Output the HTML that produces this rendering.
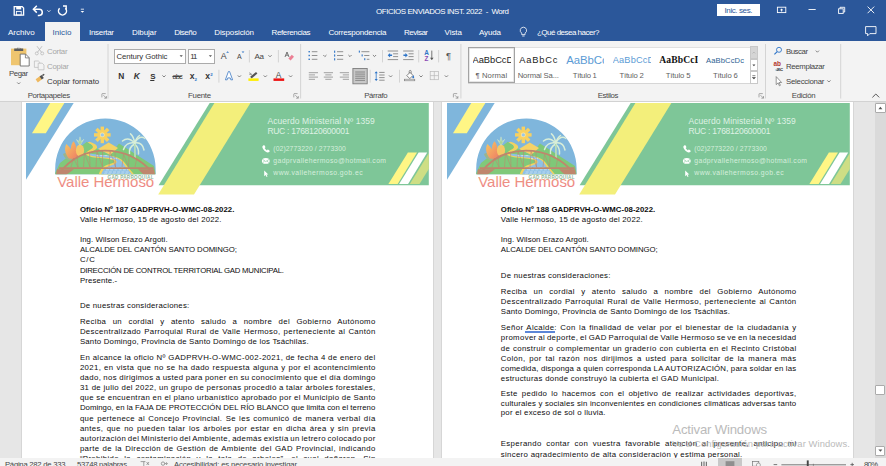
<!DOCTYPE html>
<html lang="es"><head><meta charset="utf-8"><title>OFICIOS ENVIADOS INST. 2022 - Word</title>
<style>
html,body{margin:0;padding:0}
body{width:886px;height:466px;overflow:hidden;position:relative;background:#e6e6e6;
font-family:'Liberation Sans', sans-serif;-webkit-font-smoothing:antialiased}
.t{position:absolute;white-space:pre;margin:0;padding:0}
.s{position:absolute;margin:0;padding:0}
svg{position:absolute;overflow:visible}
</style></head>
<body>
<div class="s" style="left:21.6px;top:101.5px;width:411.2px;height:380px;background:#fff;box-shadow:0 0 0 0.7px #cfcfcf"></div>
<div class="s" style="left:441.8px;top:101.5px;width:411.6px;height:380px;background:#fff;box-shadow:0 0 0 0.7px #cfcfcf"></div>
<svg class="s" style="left:26.0px;top:103.2px" width="403" height="93" viewBox="0 0 403 93" font-family="Liberation Sans, sans-serif"><path d="M0 0H47.7L0 76.8Z" fill="#7fb6dc"/><path d="M24.2 0H38.4L19.8 30.2H6Z" fill="#fff685"/><path d="M183.7 0H402.8V82.2H132.6Z" fill="#7ec698"/><path d="M188.4 0H224.4L168 91.6H132.2Z" fill="#f3ef7b"/><path d="M381.9 49.5H391L371.7 81H362.4Z" fill="#fff685"/><path d="M392.6 49.5H401.2L382.1 81H373.1Z" fill="#fff"/><path d="M383.8 81H393.5L402.8 66V50.3Z" fill="#cede85"/><defs><clipPath id="dome"><path d="M29.2 71.2 L29.2 65.6 A50.2 50.2 0 0 1 129.600 65.6 L129.600 71.2 Z"/></clipPath><linearGradient id="vh" x1="0" y1="0" x2="0" y2="1"><stop offset="0" stop-color="#f0a070"/><stop offset="1" stop-color="#ea6a78"/></linearGradient><linearGradient id="fl" x1="0" y1="0" x2="1" y2="1"><stop offset="0" stop-color="#f8c860"/><stop offset="1" stop-color="#ee7a66"/></linearGradient></defs><g clip-path="url(#dome)"><rect x="29" y="14" width="101" height="58" fill="#7fb6dc"/><g transform="translate(76.3 31.9)" fill="#f8d160"><rect x="-1.7" y="-8.3" width="3.4" height="4.6" transform="rotate(0)"/><rect x="-1.7" y="-8.3" width="3.4" height="4.6" transform="rotate(45)"/><rect x="-1.7" y="-8.3" width="3.4" height="4.6" transform="rotate(90)"/><rect x="-1.7" y="-8.3" width="3.4" height="4.6" transform="rotate(135)"/><rect x="-1.7" y="-8.3" width="3.4" height="4.6" transform="rotate(180)"/><rect x="-1.7" y="-8.3" width="3.4" height="4.6" transform="rotate(225)"/><rect x="-1.7" y="-8.3" width="3.4" height="4.6" transform="rotate(270)"/><rect x="-1.7" y="-8.3" width="3.4" height="4.6" transform="rotate(315)"/><circle r="4.9"/><circle r="2.4" fill="#ffe9a0"/><circle r="1.7" fill="#9cc7e6"/></g><path d="M84 52 L93 40.6 L128 63 L130 72 L84 72Z" fill="#7fc878"/><path d="M72 46 L82.7 39.5 L92 45 L84 52Z" fill="#f5d267"/><path d="M28 72 L34 60 L60.8 38.8 L72 46 L100 60 L100 72Z" fill="#80c97a"/><path d="M63.6 38.8 C69 40.5 72.6 43 70.6 45.6 C68 48.4 63 49 63.6 51 C66 53 80 51 90 54 C97 56.4 99 60 101 63 L108.6 72 L72.6 72 C73.6 68 75.6 64.6 79.6 62.6 C84 60.6 90 60.4 88 57.6 C84 54.6 66 56 60.6 52 C57.6 49 65 47 66.6 45 C68 43 65 41 61.6 39.6Z" fill="#f3d35e"/><path d="M64 50.6 C70 52.2 82 51.4 90 54.8 C95.600 57.2 97 60 99.2 63.2 L106.600 72 L75 72 C76 68.4 77.600 65.6 81.2 63.8 C86 61.600 92.600 61 90 57.4 C86 53.6 70 55 63.2 52Z" fill="#8fc1e6"/><path d="M82 64.6h16M80 66.800h22M78.600 69h25M78 71h27M70 52.6h12M84 55.6h7" stroke="#e2f0fa" stroke-width="0.6" fill="none" stroke-dasharray="3 1.2"/><g fill="none" stroke="#d8eed8" stroke-width="1.5" stroke-linecap="round"><path d="M109.2 55 L108.6 40"/><path d="M108.6 40 C104 35 100 35 96.5 38"/><path d="M108.6 40 C112 34 116 33 119 35.5"/><path d="M108.6 40 C103 39 99 42 97.5 46.5"/><path d="M108.6 40 C114 39 117 42 118 47"/><path d="M108.6 40 C108 35 106 32 104.5 30.8"/><path d="M108.6 40 C110 36 112 33.5 113.5 32.5"/><path d="M108.6 41 C105 43 103 47 103.5 50.5"/><path d="M108.6 41 C112 44 113 47 112.5 51"/></g><path d="M109.2 55 L108.8 41" stroke="#9fcf9c" stroke-width="0.9" fill="none"/><path d="M37 51 C40 49 46 50 48.5 56 C44 58.5 39 57 37 51Z" fill="#9cb48c"/><path d="M43 55.5 C38 50 38.5 44 40.5 41 C42.5 43 44 44.5 44.8 46.5 C44.8 43 45.8 40 47.6 38.3 C50 41 50.6 45 50 48 C51.5 47 52 46.5 52.5 45.8 C54 50 52 54.5 48.5 56Z" fill="url(#fl)"/><ellipse cx="54" cy="47.6" rx="4.1" ry="6" fill="#f6c866"/><path d="M54 42.5 L50.4 36.5 L53 38.6 L54 33.8 L55.2 38.6 L57.8 36.3 L54 42.5Z" fill="#a9d39c" stroke="#e4f2dc" stroke-width="0.4"/><g fill="none" stroke="#bf866d"><path d="M33.5 70 C48 51 66 47.6 79 47.6 C94 47.6 112 53 127 70" stroke-width="1.9"/><path d="M33 65.2 H127.5" stroke-width="1.7"/><path d="M45 64 L47.5 55 M52 64 L51 52.5 M57.5 64 L58.5 50 M64 64 L63.5 48.8 M70 64 L71 48 M76.5 64 L76.5 47.8 M83 64 L84 48 M89.5 64 L89 49 M96 64 L97.5 51 M102.5 64 L103 53 M109 64 L110.5 56.5 M47.5 55 L52 64 M58.5 50 L64 64 M71 48 L76.5 64 M84 48 L89.5 64 M97.5 51 L102.5 64" stroke-width="0.55"/></g><path d="M31 66.3 L48 66.3 L40 72 L30 72Z M112 66.3 L128 66.3 L129 72 L118 72Z" fill="#bf866d"/></g><text x="31.2" y="84.2" font-size="15" opacity="0.9" fill="url(#vh)" textLength="97" lengthAdjust="spacing">Valle Hermoso</text><text x="81.5" y="76.4" font-size="4.6" font-weight="700" fill="#8fb79a" textLength="46" lengthAdjust="spacing">GAD PARROQUIAL</text><text x="241.4" y="20.8" font-size="8.5" fill="#dff2e5" textLength="107.4" lengthAdjust="spacing">Acuerdo Ministerial Nº 1359</text><text x="241.4" y="30.6" font-size="8.5" fill="#dff2e5" textLength="82" lengthAdjust="spacing">RUC : 1768120600001</text><text x="247.3" y="47.8" font-size="6.8" fill="#d6eedd" textLength="72.5" lengthAdjust="spacing">(02)2773220 / 2773300</text><text x="247.3" y="60" font-size="6.8" fill="#d6eedd" textLength="112.7" lengthAdjust="spacing">gadprvallehermoso@hotmail.com</text><text x="247.3" y="72.2" font-size="6.8" fill="#d6eedd" textLength="89.3" lengthAdjust="spacing">www.vallehermoso.gob.ec</text><path d="M237.2 42.6c.5-.5 1-.5 1.400 0l.7 1.100c.2.400.1.700-.2 1l-.5.400c.5 1 1.300 1.800 2.300 2.300l.4-.5c.3-.300.600-.400 1-.2l1.100.700c.5.400.5.900 0 1.400-1 1-2.300.900-3.900-.2-1.500-1.100-2.500-2.400-3-3.900-.3-.8-.1-1.500.7-2.100z" fill="#fff"/><ellipse cx="239.8" cy="57.9" rx="3.9" ry="2.9" fill="#fff"/><path d="M236.6 56.4L239.8 58.6L243 56.4M236.8 59.6L238.7 58M242.8 59.6L240.9 58" stroke="#7ec698" stroke-width="0.6" fill="none"/><path d="M238.2 67.4L238.2 73.2L239.6 71.9L240.600 74L241.5 73.6L240.5 71.600L242.300 71.5Z" fill="#fff"/></svg>
<svg class="s" style="left:447.0px;top:103.2px" width="403" height="93" viewBox="0 0 403 93" font-family="Liberation Sans, sans-serif"><path d="M0 0H47.7L0 76.8Z" fill="#7fb6dc"/><path d="M24.2 0H38.4L19.8 30.2H6Z" fill="#fff685"/><path d="M183.7 0H402.8V82.2H132.6Z" fill="#7ec698"/><path d="M188.4 0H224.4L168 91.6H132.2Z" fill="#f3ef7b"/><path d="M381.9 49.5H391L371.7 81H362.4Z" fill="#fff685"/><path d="M392.6 49.5H401.2L382.1 81H373.1Z" fill="#fff"/><path d="M383.8 81H393.5L402.8 66V50.3Z" fill="#cede85"/><defs><clipPath id="dome2"><path d="M29.2 71.2 L29.2 65.6 A50.2 50.2 0 0 1 129.600 65.6 L129.600 71.2 Z"/></clipPath><linearGradient id="vh2" x1="0" y1="0" x2="0" y2="1"><stop offset="0" stop-color="#f0a070"/><stop offset="1" stop-color="#ea6a78"/></linearGradient><linearGradient id="fl2" x1="0" y1="0" x2="1" y2="1"><stop offset="0" stop-color="#f8c860"/><stop offset="1" stop-color="#ee7a66"/></linearGradient></defs><g clip-path="url(#dome2)"><rect x="29" y="14" width="101" height="58" fill="#7fb6dc"/><g transform="translate(76.3 31.9)" fill="#f8d160"><rect x="-1.7" y="-8.3" width="3.4" height="4.6" transform="rotate(0)"/><rect x="-1.7" y="-8.3" width="3.4" height="4.6" transform="rotate(45)"/><rect x="-1.7" y="-8.3" width="3.4" height="4.6" transform="rotate(90)"/><rect x="-1.7" y="-8.3" width="3.4" height="4.6" transform="rotate(135)"/><rect x="-1.7" y="-8.3" width="3.4" height="4.6" transform="rotate(180)"/><rect x="-1.7" y="-8.3" width="3.4" height="4.6" transform="rotate(225)"/><rect x="-1.7" y="-8.3" width="3.4" height="4.6" transform="rotate(270)"/><rect x="-1.7" y="-8.3" width="3.4" height="4.6" transform="rotate(315)"/><circle r="4.9"/><circle r="2.4" fill="#ffe9a0"/><circle r="1.7" fill="#9cc7e6"/></g><path d="M84 52 L93 40.6 L128 63 L130 72 L84 72Z" fill="#7fc878"/><path d="M72 46 L82.7 39.5 L92 45 L84 52Z" fill="#f5d267"/><path d="M28 72 L34 60 L60.8 38.8 L72 46 L100 60 L100 72Z" fill="#80c97a"/><path d="M63.6 38.8 C69 40.5 72.6 43 70.6 45.6 C68 48.4 63 49 63.6 51 C66 53 80 51 90 54 C97 56.4 99 60 101 63 L108.6 72 L72.6 72 C73.6 68 75.6 64.6 79.6 62.6 C84 60.6 90 60.4 88 57.6 C84 54.6 66 56 60.6 52 C57.6 49 65 47 66.6 45 C68 43 65 41 61.6 39.6Z" fill="#f3d35e"/><path d="M64 50.6 C70 52.2 82 51.4 90 54.8 C95.600 57.2 97 60 99.2 63.2 L106.600 72 L75 72 C76 68.4 77.600 65.6 81.2 63.8 C86 61.600 92.600 61 90 57.4 C86 53.6 70 55 63.2 52Z" fill="#8fc1e6"/><path d="M82 64.6h16M80 66.800h22M78.600 69h25M78 71h27M70 52.6h12M84 55.6h7" stroke="#e2f0fa" stroke-width="0.6" fill="none" stroke-dasharray="3 1.2"/><g fill="none" stroke="#d8eed8" stroke-width="1.5" stroke-linecap="round"><path d="M109.2 55 L108.6 40"/><path d="M108.6 40 C104 35 100 35 96.5 38"/><path d="M108.6 40 C112 34 116 33 119 35.5"/><path d="M108.6 40 C103 39 99 42 97.5 46.5"/><path d="M108.6 40 C114 39 117 42 118 47"/><path d="M108.6 40 C108 35 106 32 104.5 30.8"/><path d="M108.6 40 C110 36 112 33.5 113.5 32.5"/><path d="M108.6 41 C105 43 103 47 103.5 50.5"/><path d="M108.6 41 C112 44 113 47 112.5 51"/></g><path d="M109.2 55 L108.8 41" stroke="#9fcf9c" stroke-width="0.9" fill="none"/><path d="M37 51 C40 49 46 50 48.5 56 C44 58.5 39 57 37 51Z" fill="#9cb48c"/><path d="M43 55.5 C38 50 38.5 44 40.5 41 C42.5 43 44 44.5 44.8 46.5 C44.8 43 45.8 40 47.6 38.3 C50 41 50.6 45 50 48 C51.5 47 52 46.5 52.5 45.8 C54 50 52 54.5 48.5 56Z" fill="url(#fl2)"/><ellipse cx="54" cy="47.6" rx="4.1" ry="6" fill="#f6c866"/><path d="M54 42.5 L50.4 36.5 L53 38.6 L54 33.8 L55.2 38.6 L57.8 36.3 L54 42.5Z" fill="#a9d39c" stroke="#e4f2dc" stroke-width="0.4"/><g fill="none" stroke="#bf866d"><path d="M33.5 70 C48 51 66 47.6 79 47.6 C94 47.6 112 53 127 70" stroke-width="1.9"/><path d="M33 65.2 H127.5" stroke-width="1.7"/><path d="M45 64 L47.5 55 M52 64 L51 52.5 M57.5 64 L58.5 50 M64 64 L63.5 48.8 M70 64 L71 48 M76.5 64 L76.5 47.8 M83 64 L84 48 M89.5 64 L89 49 M96 64 L97.5 51 M102.5 64 L103 53 M109 64 L110.5 56.5 M47.5 55 L52 64 M58.5 50 L64 64 M71 48 L76.5 64 M84 48 L89.5 64 M97.5 51 L102.5 64" stroke-width="0.55"/></g><path d="M31 66.3 L48 66.3 L40 72 L30 72Z M112 66.3 L128 66.3 L129 72 L118 72Z" fill="#bf866d"/></g><text x="31.2" y="84.2" font-size="15" opacity="0.9" fill="url(#vh2)" textLength="97" lengthAdjust="spacing">Valle Hermoso</text><text x="81.5" y="76.4" font-size="4.6" font-weight="700" fill="#8fb79a" textLength="46" lengthAdjust="spacing">GAD PARROQUIAL</text><text x="241.4" y="20.8" font-size="8.5" fill="#dff2e5" textLength="107.4" lengthAdjust="spacing">Acuerdo Ministerial Nº 1359</text><text x="241.4" y="30.6" font-size="8.5" fill="#dff2e5" textLength="82" lengthAdjust="spacing">RUC : 1768120600001</text><text x="247.3" y="47.8" font-size="6.8" fill="#d6eedd" textLength="72.5" lengthAdjust="spacing">(02)2773220 / 2773300</text><text x="247.3" y="60" font-size="6.8" fill="#d6eedd" textLength="112.7" lengthAdjust="spacing">gadprvallehermoso@hotmail.com</text><text x="247.3" y="72.2" font-size="6.8" fill="#d6eedd" textLength="89.3" lengthAdjust="spacing">www.vallehermoso.gob.ec</text><path d="M237.2 42.6c.5-.5 1-.5 1.400 0l.7 1.100c.2.400.1.700-.2 1l-.5.400c.5 1 1.300 1.800 2.300 2.300l.4-.5c.3-.300.600-.400 1-.2l1.100.700c.5.400.5.900 0 1.400-1 1-2.300.900-3.900-.2-1.500-1.100-2.500-2.400-3-3.900-.3-.8-.1-1.500.7-2.100z" fill="#fff"/><ellipse cx="239.8" cy="57.9" rx="3.9" ry="2.9" fill="#fff"/><path d="M236.6 56.4L239.8 58.6L243 56.4M236.8 59.6L238.7 58M242.8 59.6L240.9 58" stroke="#7ec698" stroke-width="0.6" fill="none"/><path d="M238.2 67.4L238.2 73.2L239.6 71.9L240.600 74L241.5 73.6L240.5 71.600L242.300 71.5Z" fill="#fff"/></svg>
<div class="t" style="left:79.90px;top:205px;font-size:7.8px;line-height:9px;color:#0c0c0c;font-weight:700;letter-spacing:0.042px;">Oficio Nº 187 GADPRVH-O-WMC-08-2022.</div>
<div class="t" style="left:79.90px;top:215px;font-size:7.8px;line-height:9px;color:#0c0c0c;letter-spacing:0.205px;">Valle Hermoso, 15 de agosto del 2022.</div>
<div class="t" style="left:79.90px;top:235px;font-size:7.8px;line-height:9px;color:#0c0c0c;letter-spacing:0.097px;">Ing. Wilson Erazo Argoti.</div>
<div class="t" style="left:79.90px;top:245px;font-size:7.8px;line-height:9px;color:#0c0c0c;letter-spacing:-0.062px;">ALCALDE DEL CANTÓN SANTO DOMINGO;</div>
<div class="t" style="left:79.90px;top:255px;font-size:7.8px;line-height:9px;color:#0c0c0c;letter-spacing:0.731px;">C/C</div>
<div class="t" style="left:79.90px;top:266px;font-size:7.8px;line-height:9px;color:#0c0c0c;letter-spacing:-0.241px;">DIRECCIÓN DE CONTROL TERRITORIAL GAD MUNICIPAL.</div>
<div class="t" style="left:79.90px;top:276px;font-size:7.8px;line-height:9px;color:#0c0c0c;letter-spacing:0.146px;">Presente.-</div>
<div class="t" style="left:79.90px;top:301px;font-size:7.8px;line-height:9px;color:#0c0c0c;letter-spacing:0.244px;">De nuestras consideraciones:</div>
<div class="t" style="left:79.90px;top:317px;font-size:7.8px;line-height:9px;color:#0c0c0c;letter-spacing:0.350px;word-spacing:3.885px;">Reciba un cordial y atento saludo a nombre del Gobierno Autónomo</div>
<div class="t" style="left:79.90px;top:327px;font-size:7.8px;line-height:9px;color:#0c0c0c;letter-spacing:0.350px;word-spacing:0.593px;">Descentralizado Parroquial Rural de Valle Hermoso, perteneciente al Cantón</div>
<div class="t" style="left:79.90px;top:337px;font-size:7.8px;line-height:9px;color:#0c0c0c;letter-spacing:0.217px;">Santo Domingo, Provincia de Santo Domingo de los Tsáchilas.</div>
<div class="t" style="left:79.90px;top:353px;font-size:7.8px;line-height:9px;color:#0c0c0c;letter-spacing:0.350px;word-spacing:-0.006px;">En alcance la oficio Nº GADPRVH-O-WMC-002-2021, de fecha 4 de enero del</div>
<div class="t" style="left:79.90px;top:363px;font-size:7.8px;line-height:9px;color:#0c0c0c;letter-spacing:0.350px;word-spacing:0.451px;">2021, en vista que no se ha dado respuesta alguna y por el acontencimiento</div>
<div class="t" style="left:79.90px;top:373px;font-size:7.8px;line-height:9px;color:#0c0c0c;letter-spacing:0.350px;word-spacing:-0.302px;">dado, nos dirigimos a usted para poner en su conocimiento que el día domingo</div>
<div class="t" style="left:79.90px;top:383px;font-size:7.8px;line-height:9px;color:#0c0c0c;letter-spacing:0.350px;word-spacing:-0.116px;">31 de julio del 2022, un grupo de personas procedió a talar árboles forestales,</div>
<div class="t" style="left:79.90px;top:393px;font-size:7.8px;line-height:9px;color:#0c0c0c;letter-spacing:0.350px;word-spacing:-0.111px;">que se encuentran en el plano urbanístico aprobado por el Municipio de Santo</div>
<div class="t" style="left:79.90px;top:403px;font-size:7.8px;line-height:9px;color:#0c0c0c;letter-spacing:0.038px;">Domingo, en la FAJA DE PROTECCIÓN DEL RÍO BLANCO que limita con el terreno</div>
<div class="t" style="left:79.90px;top:414px;font-size:7.8px;line-height:9px;color:#0c0c0c;letter-spacing:0.350px;word-spacing:0.726px;">que pertenece al Concejo Provincial. Se les comunicó de manera verbal día</div>
<div class="t" style="left:79.90px;top:424px;font-size:7.8px;line-height:9px;color:#0c0c0c;letter-spacing:0.350px;word-spacing:0.922px;">antes, que no pueden talar los árboles por estar en dicha área y sin previa</div>
<div class="t" style="left:79.90px;top:434px;font-size:7.8px;line-height:9px;color:#0c0c0c;letter-spacing:0.350px;word-spacing:-0.833px;">autorización del Ministerio del Ambiente, además existía un letrero colocado por</div>
<div class="t" style="left:79.90px;top:444px;font-size:7.8px;line-height:9px;color:#0c0c0c;letter-spacing:0.350px;word-spacing:0.694px;">parte de la Dirección de Gestión de Ambiente del GAD Provincial, indicando</div>
<div class="t" style="left:79.90px;top:454px;font-size:7.8px;line-height:9px;color:#0c0c0c;letter-spacing:0.350px;word-spacing:2.837px;">“Prohibido la contaminación y la tala de arboles”, el cual dañaron. Sin</div>
<div class="t" style="left:500.80px;top:205px;font-size:7.8px;line-height:9px;color:#0c0c0c;font-weight:700;letter-spacing:0.039px;">Oficio Nº 188 GADPRVH-O-WMC-08-2022.</div>
<div class="t" style="left:500.80px;top:215px;font-size:7.8px;line-height:9px;color:#0c0c0c;letter-spacing:0.213px;">Valle Hermoso, 15 de agosto del 2022.</div>
<div class="t" style="left:500.80px;top:235px;font-size:7.8px;line-height:9px;color:#0c0c0c;letter-spacing:0.109px;">Ing. Wilson Erazo Argoti.</div>
<div class="t" style="left:500.80px;top:245px;font-size:7.8px;line-height:9px;color:#0c0c0c;letter-spacing:-0.066px;">ALCALDE DEL CANTÓN SANTO DOMINGO;</div>
<div class="t" style="left:500.80px;top:271px;font-size:7.8px;line-height:9px;color:#0c0c0c;letter-spacing:0.255px;">De nuestras consideraciones:</div>
<div class="t" style="left:500.80px;top:287px;font-size:7.8px;line-height:9px;color:#0c0c0c;letter-spacing:0.350px;word-spacing:3.885px;">Reciba un cordial y atento saludo a nombre del Gobierno Autónomo</div>
<div class="t" style="left:500.80px;top:297px;font-size:7.8px;line-height:9px;color:#0c0c0c;letter-spacing:0.350px;word-spacing:0.593px;">Descentralizado Parroquial Rural de Valle Hermoso, perteneciente al Cantón</div>
<div class="t" style="left:500.80px;top:307px;font-size:7.8px;line-height:9px;color:#0c0c0c;letter-spacing:0.224px;">Santo Domingo, Provincia de Santo Domingo de los Tsáchilas.</div>
<div class="t" style="left:500.80px;top:323px;font-size:7.8px;line-height:9px;color:#0c0c0c;letter-spacing:0.350px;word-spacing:0.899px;">Señor Alcalde: Con la finalidad de velar por el bienestar de la ciudadanía y</div>
<div class="t" style="left:500.80px;top:333px;font-size:7.8px;line-height:9px;color:#0c0c0c;letter-spacing:0.350px;word-spacing:-0.715px;">promover al deporte, el GAD Parroquial de Valle Hermoso se ve en la necesidad</div>
<div class="t" style="left:500.80px;top:344px;font-size:7.8px;line-height:9px;color:#0c0c0c;letter-spacing:0.350px;word-spacing:0.276px;">de construir o complementar un graderío con cubierta en el Recinto Cristóbal</div>
<div class="t" style="left:500.80px;top:354px;font-size:7.8px;line-height:9px;color:#0c0c0c;letter-spacing:0.350px;word-spacing:1.356px;">Colón, por tal razón nos dirijimos a usted para solicitar de la manera más</div>
<div class="t" style="left:500.80px;top:364px;font-size:7.8px;line-height:9px;color:#0c0c0c;letter-spacing:0.195px;">comedida, disponga a quien corresponda LA AUTORIZACIÓN, para soldar en las</div>
<div class="t" style="left:500.80px;top:374px;font-size:7.8px;line-height:9px;color:#0c0c0c;letter-spacing:0.305px;">estructuras donde construyó la cubierta el GAD Municipal.</div>
<div class="s" style="left:524.8px;top:331.4px;width:30.4px;height:1.7px;border-top:0.5px solid #5b86d6;border-bottom:0.5px solid #5b86d6;box-sizing:border-box"></div>
<div class="t" style="left:500.80px;top:389px;font-size:7.8px;line-height:9px;color:#0c0c0c;letter-spacing:0.350px;word-spacing:1.457px;">Este pedido lo hacemos con el objetivo de realizar actividades deportivas,</div>
<div class="t" style="left:500.80px;top:399px;font-size:7.8px;line-height:9px;color:#0c0c0c;letter-spacing:0.193px;">culturales y sociales sin inconvenientes en condiciones climáticas adversas tanto</div>
<div class="t" style="left:500.80px;top:408px;font-size:7.8px;line-height:9px;color:#0c0c0c;letter-spacing:0.233px;">por el exceso de sol o lluvia.</div>
<div class="t" style="left:500.80px;top:439px;font-size:7.8px;line-height:9px;color:#0c0c0c;letter-spacing:0.350px;word-spacing:2.033px;">Esperando contar con vuestra favorable atención al presente, anticipo mi</div>
<div class="t" style="left:500.80px;top:450px;font-size:7.8px;line-height:9px;color:#0c0c0c;letter-spacing:0.316px;">sincero agradecimiento de alta consideración y estima personal.</div>
<div class="t" style="left:672.30px;top:422px;font-size:13.2px;line-height:15px;color:#b4b4b4;letter-spacing:-0.191px;opacity:0.9;">Activar Windows</div>
<div class="t" style="left:672.30px;top:438px;font-size:9.4px;line-height:11px;color:#b4b4b4;letter-spacing:0.089px;opacity:0.9;">Ve a Configuración para activar Windows.</div>
<div class="s" style="left:875px;top:101.5px;width:11px;height:357px;background:#dadada"></div>
<div class="s" style="left:875.3px;top:102.8px;width:10.6px;height:10px;background:#fff;border:0.7px solid #ababab;box-sizing:border-box;border-radius:1px"></div>
<div class="s" style="left:875.3px;top:445.6px;width:10.2px;height:10px;background:#fff;border:0.7px solid #ababab;box-sizing:border-box;border-radius:1px"></div>
<div class="s" style="left:875.4px;top:384.6px;width:10px;height:10.4px;background:#fff;border:0.7px solid #ababab;box-sizing:border-box;border-radius:1px"></div>
<div class="s" style="left:0;top:458px;width:886px;height:8px;background:#f3f3f3"></div>
<div class="s" style="left:0;top:0;width:886px;height:41.3px;background:#2b579a"></div>
<div class="s" style="left:0;top:41.3px;width:886px;height:59.7px;background:#f3f3f3;border-bottom:0.8px solid #d2d2d2"></div>
<div class="s" style="left:45.1px;top:22px;width:34.6px;height:20px;background:#f3f3f3"></div>
<div class="s" style="left:717px;top:3.8px;width:43px;height:12.6px;background:#fff"></div>
<div class="t" style="left:376.00px;top:7px;font-size:7.9px;line-height:9px;color:#fff;letter-spacing:-0.393px;">OFICIOS ENVIADOS INST. 2022  -  Word</div>
<div class="t" style="left:724.50px;top:6px;font-size:8.0px;line-height:9px;color:#2b579a;letter-spacing:-0.398px;">Inic. ses.</div>
<div class="t" style="left:8.00px;top:28px;font-size:8.0px;line-height:9px;color:#fff;letter-spacing:-0.015px;">Archivo</div>
<div class="t" style="left:52.60px;top:28px;font-size:8.0px;line-height:9px;color:#2b579a;letter-spacing:0.023px;">Inicio</div>
<div class="t" style="left:89.00px;top:28px;font-size:8.0px;line-height:9px;color:#fff;letter-spacing:-0.304px;">Insertar</div>
<div class="t" style="left:132.00px;top:28px;font-size:8.0px;line-height:9px;color:#fff;letter-spacing:-0.124px;">Dibujar</div>
<div class="t" style="left:174.20px;top:28px;font-size:8.0px;line-height:9px;color:#fff;letter-spacing:-0.481px;">Diseño</div>
<div class="t" style="left:214.30px;top:28px;font-size:8.0px;line-height:9px;color:#fff;letter-spacing:-0.121px;">Disposición</div>
<div class="t" style="left:271.50px;top:28px;font-size:8.0px;line-height:9px;color:#fff;letter-spacing:-0.369px;">Referencias</div>
<div class="t" style="left:328.50px;top:28px;font-size:8.0px;line-height:9px;color:#fff;letter-spacing:-0.210px;">Correspondencia</div>
<div class="t" style="left:404.00px;top:28px;font-size:8.0px;line-height:9px;color:#fff;letter-spacing:-0.521px;">Revisar</div>
<div class="t" style="left:444.50px;top:28px;font-size:8.0px;line-height:9px;color:#fff;letter-spacing:-0.035px;">Vista</div>
<div class="t" style="left:479.00px;top:28px;font-size:8.0px;line-height:9px;color:#fff;letter-spacing:-0.137px;">Ayuda</div>
<div class="t" style="left:537.00px;top:28px;font-size:8.0px;line-height:9px;color:#fff;letter-spacing:-0.514px;">¿Qué desea hacer?</div>
<div class="t" style="left:9.00px;top:69px;font-size:7.8px;line-height:9px;color:#444;letter-spacing:-0.453px;">Pegar</div>
<div class="t" style="left:47.00px;top:47px;font-size:7.8px;line-height:9px;color:#a6a6a6;letter-spacing:-0.214px;">Cortar</div>
<div class="t" style="left:47.00px;top:62px;font-size:7.8px;line-height:9px;color:#a6a6a6;letter-spacing:-0.214px;">Copiar</div>
<div class="t" style="left:47.00px;top:77px;font-size:7.8px;line-height:9px;color:#333;letter-spacing:0.048px;">Copiar formato</div>
<div class="t" style="left:27.70px;top:91px;font-size:7.8px;line-height:9px;color:#484848;letter-spacing:-0.314px;">Portapapeles</div>
<div class="t" style="left:188.10px;top:91px;font-size:7.8px;line-height:9px;color:#484848;letter-spacing:-0.276px;">Fuente</div>
<div class="t" style="left:364.20px;top:91px;font-size:7.8px;line-height:9px;color:#484848;letter-spacing:-0.363px;">Párrafo</div>
<div class="t" style="left:597.80px;top:91px;font-size:7.8px;line-height:9px;color:#484848;letter-spacing:-0.395px;">Estilos</div>
<div class="t" style="left:791.80px;top:91px;font-size:7.8px;line-height:9px;color:#484848;letter-spacing:-0.296px;">Edición</div>
<div class="s" style="left:113.8px;top:48.6px;width:71.9px;height:15.1px;background:#fff;border:0.8px solid #ababab;box-sizing:border-box"></div>
<div class="s" style="left:187.5px;top:48.6px;width:27.4px;height:15.1px;background:#fff;border:0.8px solid #ababab;box-sizing:border-box"></div>
<div class="t" style="left:116.40px;top:52px;font-size:7.8px;line-height:9px;color:#333;letter-spacing:-0.070px;">Century Gothic</div>
<div class="t" style="left:190.20px;top:52px;font-size:7.8px;line-height:9px;color:#333;letter-spacing:-0.9px;">11</div>
<div class="t" style="left:118.30px;top:71px;font-size:8.4px;line-height:10px;color:#333;font-weight:700;letter-spacing:-0.263px;">N</div>
<div class="t" style="left:133.80px;top:71px;font-size:8.4px;line-height:10px;color:#333;font-weight:700;font-style:italic;letter-spacing:-0.963px;">K</div>
<div class="t" style="left:150.20px;top:72px;font-size:8.0px;line-height:9px;color:#333;font-weight:700;letter-spacing:-1.144px;text-decoration:underline;text-underline-offset:0.6px;">S</div>
<div class="t" style="left:172.40px;top:72px;font-size:7.6px;line-height:9px;color:#444;letter-spacing:-0.975px;text-decoration:line-through;text-decoration-thickness:0.5px;">abc</div>
<div class="t" style="left:189.80px;top:71px;font-size:8.6px;line-height:10px;color:#333;font-weight:700;letter-spacing:-0.181px;">x</div>
<div class="t" style="left:194.60px;top:77px;font-size:4.4px;line-height:5px;color:#2e75c8;font-weight:700;">2</div>
<div class="t" style="left:205.20px;top:71px;font-size:8.6px;line-height:10px;color:#333;font-weight:700;letter-spacing:-0.181px;">x</div>
<div class="t" style="left:210.20px;top:72px;font-size:4.4px;line-height:5px;color:#2e75c8;font-weight:700;">2</div>
<div class="t" style="left:220.70px;top:51px;font-size:8.8px;line-height:10px;color:#444;letter-spacing:0.325px;">A</div>
<div class="t" style="left:236.90px;top:53px;font-size:7.0px;line-height:7px;color:#444;letter-spacing:0.128px;">A</div>
<div class="t" style="left:254.60px;top:52px;font-size:8.0px;line-height:9px;color:#444;letter-spacing:-0.397px;">Aa</div>
<div class="t" style="left:275.80px;top:70px;font-size:8.4px;line-height:10px;color:#444;letter-spacing:0.906px;">A</div>
<div class="t" style="left:424.20px;top:49px;font-size:6.4px;line-height:7px;color:#2e75c8;font-weight:700;letter-spacing:-0.025px;">A</div>
<div class="t" style="left:424.40px;top:55px;font-size:6.4px;line-height:7px;color:#8a4bb5;font-weight:700;letter-spacing:0.294px;">Z</div>
<div class="t" style="left:446.00px;top:50px;font-size:9.4px;line-height:11px;color:#555;">¶</div>
<div class="s" style="left:467.8px;top:46.5px;width:290.4px;height:37px;background:#fff;border-top:0.6px solid #e1e1e1;border-bottom:0.6px solid #d6d6d6;box-sizing:border-box"></div>
<div class="s" style="left:467.8px;top:46.5px;width:47px;height:36.9px;background:#fff;border:1.1px solid #a3a3a3;box-shadow:inset 0 0 0 0.7px #dedede;box-sizing:border-box"></div>
<div class="s" style="left:749.5px;top:45.9px;width:8.7px;height:13.5px;background:#d5d5d5;border:0.5px solid #c8c8c8;box-sizing:border-box"></div>
<div class="s" style="left:749.5px;top:59.4px;width:8.7px;height:11.8px;background:#fff;border:0.5px solid #c8c8c8;box-sizing:border-box"></div>
<div class="s" style="left:749.5px;top:71.2px;width:8.7px;height:12.7px;background:#fff;border:0.5px solid #c8c8c8;box-sizing:border-box"></div>
<div class="t" style="left:472.60px;top:55px;font-size:9.3px;line-height:10px;color:#222;width:38.2px;overflow:hidden;letter-spacing:-0.05px;">AaBbCcD</div>
<div class="t" style="left:475.50px;top:71px;font-size:7.7px;line-height:9px;color:#5f5f5f;letter-spacing:0.079px;">¶ Normal</div>
<div class="t" style="left:519.30px;top:55px;font-size:9.3px;line-height:10px;color:#222;letter-spacing:0.778px;">AaBbCc</div>
<div class="t" style="left:517.70px;top:71px;font-size:7.7px;line-height:9px;color:#5f5f5f;letter-spacing:-0.139px;">Normal Sa...</div>
<div class="t" style="left:566.30px;top:54px;font-size:11.4px;line-height:12px;color:#5b9bd5;width:37.8px;overflow:hidden;letter-spacing:-0.1px;">AaBbCc</div>
<div class="t" style="left:572.80px;top:71px;font-size:7.7px;line-height:9px;color:#5f5f5f;letter-spacing:-0.220px;">Título 1</div>
<div class="t" style="left:612.70px;top:55px;font-size:9.2px;line-height:10px;color:#5b9bd5;width:38px;overflow:hidden;letter-spacing:0.2px;">AaBbCcD</div>
<div class="t" style="left:619.40px;top:71px;font-size:7.7px;line-height:9px;color:#5f5f5f;letter-spacing:-0.163px;">Título 2</div>
<div class="t" style="left:659.30px;top:54px;font-size:9.6px;line-height:11px;color:#111;font-family:'Liberation Serif', serif;font-weight:700;width:38.6px;overflow:hidden;letter-spacing:0.1px;">AaBbCcI</div>
<div class="t" style="left:665.70px;top:71px;font-size:7.7px;line-height:9px;color:#5f5f5f;letter-spacing:-0.106px;">Título 5</div>
<div class="t" style="left:706.00px;top:56px;font-size:7.6px;line-height:9px;color:#2f5f93;letter-spacing:0.123px;">AaBbCcDc</div>
<div class="t" style="left:712.90px;top:71px;font-size:7.7px;line-height:9px;color:#5f5f5f;letter-spacing:-0.092px;">Título 6</div>
<div class="t" style="left:786.00px;top:47px;font-size:7.8px;line-height:9px;color:#444;letter-spacing:-0.456px;">Buscar</div>
<div class="t" style="left:786.00px;top:62px;font-size:7.8px;line-height:9px;color:#444;letter-spacing:-0.350px;">Reemplazar</div>
<div class="t" style="left:786.00px;top:77px;font-size:7.8px;line-height:9px;color:#444;letter-spacing:-0.235px;">Seleccionar</div>
<div class="t" style="left:5.00px;top:460px;font-size:7.7px;line-height:9px;color:#444;letter-spacing:-0.254px;">Página 282 de 333</div>
<div class="t" style="left:77.00px;top:460px;font-size:7.7px;line-height:9px;color:#444;letter-spacing:-0.232px;">53748 palabras</div>
<div class="t" style="left:174.00px;top:460px;font-size:7.7px;line-height:9px;color:#444;letter-spacing:-0.129px;">Accesibilidad: es necesario investigar</div>
<div class="t" style="left:864.00px;top:460px;font-size:7.7px;line-height:9px;color:#444;letter-spacing:-0.695px;">80%</div>
<svg class="s" style="left:0;top:0" width="886" height="466" viewBox="0 0 886 466"><path d="M14.2 6.6h8l1.400 1.400v7.200h-9.400z" fill="none" stroke="#fff" stroke-width="1.3"/><rect x="16.20" y="6.60" width="5.00" height="2.80" fill="#fff"/><rect x="16.40" y="11.40" width="4.80" height="3.60" fill="none" stroke="#fff" stroke-width="0.9"/><path d="M34 9.2h5.200a3 3 0 0 1 0 6.200h-1.400" fill="none" stroke="#fff" stroke-width="1.5"/><path d="M36.8 5.8L33.4 9.2L36.8 12.6" fill="none" stroke="#fff" stroke-width="1.5"/><path d="M47.40 10.25l1.50 1.50l1.50 -1.50" stroke="#fff" stroke-width="0.8" fill="none"/><path d="M59.6 8.2a4 4 0 1 0 5.800 0" fill="none" stroke="#fff" stroke-width="1.5"/><path d="M63 6h3.2v3.400" fill="none" stroke="#fff" stroke-width="1.4"/><path d="M80.8 9.2h3.200" stroke="#fff" stroke-width="0.8"/><path d="M80.6 11l1.800 1.800l1.800 -1.800z" fill="#fff"/><rect x="777.40" y="7.20" width="8.40" height="5.40" fill="none" stroke="#fff" stroke-width="0.9"/><path d="M780 10.2l1.600 -1.700l1.600 1.700z" fill="#fff"/><rect x="781.10" y="10.00" width="1.00" height="1.50" fill="#fff"/><path d="M808.5 9.5h7.2" stroke="#fff" stroke-width="0.9"/><rect x="838.60" y="8.80" width="4.60" height="4.60" fill="none" stroke="#fff" stroke-width="0.9"/><path d="M840 8.6v-1.300h4.700v4.700h-1.300" fill="none" stroke="#fff" stroke-width="0.9"/><path d="M867.6 6.600l6.600 6.600m0 -6.600l-6.600 6.600" stroke="#fff" stroke-width="0.9"/><path d="M865.6 26.6h10.400v7h-6.200l-2.200 2.200v-2.200h-2z" fill="none" stroke="#fff" stroke-width="0.9"/><path d="M523.4 27.2a3.2 3.2 0 0 1 1.700 5.900v1.500h-3.400v-1.500a3.2 3.2 0 0 1 1.700 -5.900z" fill="none" stroke="#fff" stroke-width="0.8"/><path d="M522.2 36h2.400" stroke="#fff" stroke-width="0.8"/><rect x="11.00" y="48.60" width="15.40" height="16.60" fill="#efc56f"/><path d="M14.2 51V48.6h2.600a2 1.900 0 0 1 3.800 0h2.600V51z" fill="#5d5d5d"/><rect x="17.40" y="47.20" width="2.60" height="1.20" fill="#f3f3f3"/><path d="M20.2 54.1h5.400l3.600 3.600v8.300h-9z" fill="#fff" stroke="#5d5d5d" stroke-width="0.8"/><path d="M25.4 54.3v3.600h3.600" fill="none" stroke="#5d5d5d" stroke-width="0.7"/><path d="M17.20 82.45l1.50 1.50l1.50 -1.50" stroke="#666" stroke-width="0.8" fill="none"/><path d="M37 46.2l4.600 6.200M42 46.2l-4.600 6.200" stroke="#b4b4b4" stroke-width="0.8"/><circle cx="36.8" cy="53.4" r="1.500" fill="none" stroke="#b4b4b4" stroke-width="0.7"/><circle cx="42.2" cy="53.4" r="1.500" fill="none" stroke="#b4b4b4" stroke-width="0.7"/><path d="M34.4 61h4l1.400 1.400v5h-5.400z" fill="#f3f3f3" stroke="#b9b9b9" stroke-width="0.7"/><path d="M38.2 63.2h4l1.800 1.800v4.800h-5.800z" fill="#f3f3f3" stroke="#b9b9b9" stroke-width="0.7"/><path d="M35.600 79.2l4.200 -3l2.200 3l-4.200 3.200z" fill="#efb95f"/><path d="M39.600 76.4l2 -1.400l2.200 3l-2 1.400z" fill="#4f4f4f"/><path d="M42.4 75.600l1.800 -1.400" stroke="#4f4f4f" stroke-width="1.4"/><path d="M105.70 93.60h-3.6M101.90 93.80v3.6" stroke="#777" stroke-width="0.6" fill="none"/><path d="M103.40 95.20l3 3m0 -2.2v2.2h-2.2" stroke="#777" stroke-width="0.6" fill="none"/><path d="M108.00 44.00V98.50" stroke="#cbcbcb" stroke-width="0.8"/><path d="M179.6 55.2h3.200l-1.600 1.800z" fill="#555"/><path d="M208.8 55.2h3.200l-1.600 1.800z" fill="#555"/><path d="M162.40 75.40l1.60 1.60l1.60 -1.60" stroke="#666" stroke-width="0.8" fill="none"/><path d="M226.2 52.8l1.400 -1.600l1.400 1.600z" fill="#2e75c8"/><path d="M241.6 51.4l1.400 1.600l1.400 -1.600z" fill="#2e75c8"/><path d="M249.40 50.00V62.40" stroke="#cbcbcb" stroke-width="0.8"/><path d="M268.40 55.20l1.60 1.60l1.60 -1.60" stroke="#666" stroke-width="0.8" fill="none"/><path d="M278.40 50.00V62.40" stroke="#cbcbcb" stroke-width="0.8"/><path d="M285 57l2 -5l2 5M285.800 55.2h2.400" fill="none" stroke="#555" stroke-width="0.8"/><path d="M288.400 58.600l3.400 -3.800l2.200 2l-3.400 3.800z" fill="#ec7f94"/><path d="M218.90 69.80V82.60" stroke="#cbcbcb" stroke-width="0.8"/><path d="M225.4 79.8l3 -8.200a.7 .7 0 0 1 1.200 0l3 8.200h-1.800l-.6 -1.900h-2.400l-.6 1.900z" fill="#fff" stroke="#3b78c4" stroke-width="0.8"/><path d="M237.80 75.40l1.60 1.60l1.60 -1.60" stroke="#666" stroke-width="0.8" fill="none"/><path d="M250.2 76.800l5.800 -4.800l1.400 1.600l-5.800 4.800z" fill="#555"/><path d="M249 74.2h3M249.600 72.4l2 3" stroke="#555" stroke-width="0.5"/><rect x="248.40" y="78.40" width="10.20" height="2.50" fill="#ffee00"/><path d="M263.70 75.40l1.60 1.60l1.60 -1.60" stroke="#666" stroke-width="0.8" fill="none"/><rect x="273.50" y="78.40" width="10.70" height="2.50" fill="#ee1111"/><path d="M289.00 75.40l1.60 1.60l1.60 -1.60" stroke="#666" stroke-width="0.8" fill="none"/><path d="M297.60 93.60h-3.6M293.80 93.80v3.6" stroke="#777" stroke-width="0.6" fill="none"/><path d="M295.30 95.20l3 3m0 -2.2v2.2h-2.2" stroke="#777" stroke-width="0.6" fill="none"/><path d="M300.60 44.00V98.50" stroke="#cbcbcb" stroke-width="0.8"/><rect x="308.50" y="51.00" width="1.40" height="1.40" fill="#2e75c8"/><path d="M311.8 51.70h5.600" stroke="#777" stroke-width="0.8"/><rect x="308.50" y="54.80" width="1.40" height="1.40" fill="#2e75c8"/><path d="M311.8 55.50h5.600" stroke="#777" stroke-width="0.8"/><rect x="308.50" y="58.60" width="1.40" height="1.40" fill="#2e75c8"/><path d="M311.8 59.30h5.600" stroke="#777" stroke-width="0.8"/><path d="M323.30 55.00l1.60 1.60l1.60 -1.60" stroke="#666" stroke-width="0.8" fill="none"/><rect x="334.10" y="50.60" width="1.10" height="2.20" fill="#2e75c8"/><path d="M337 51.70h6.200" stroke="#777" stroke-width="0.8"/><rect x="334.10" y="54.40" width="1.10" height="2.20" fill="#2e75c8"/><path d="M337 55.50h6.200" stroke="#777" stroke-width="0.8"/><rect x="334.10" y="58.20" width="1.10" height="2.20" fill="#2e75c8"/><path d="M337 59.30h6.200" stroke="#777" stroke-width="0.8"/><path d="M348.40 55.00l1.60 1.60l1.60 -1.60" stroke="#666" stroke-width="0.8" fill="none"/><rect x="358.80" y="50.60" width="1.10" height="2.00" fill="#2e75c8"/><path d="M361.400 51.7h8" stroke="#777" stroke-width="0.8"/><rect x="361.60" y="54.40" width="1.10" height="2.00" fill="#2e75c8"/><path d="M364.2 55.5h5.200" stroke="#777" stroke-width="0.8"/><rect x="364.20" y="58.20" width="1.10" height="2.00" fill="#2e75c8"/><path d="M366.800 59.3h2.600" stroke="#777" stroke-width="0.8"/><path d="M372.90 55.00l1.60 1.60l1.60 -1.60" stroke="#666" stroke-width="0.8" fill="none"/><path d="M382.50 50.00V62.40" stroke="#cbcbcb" stroke-width="0.8"/><path d="M387.70 51h10.400M387.70 59.600h10.400" stroke="#777" stroke-width="0.8"/><path d="M393.10 53.800h5M393.10 56.600h5" stroke="#777" stroke-width="0.8"/><path d="M387.70 55.2l2.400 -2.200v1.500h2v1.400h-2v1.500z" fill="#2e75c8"/><path d="M403.20 51h10.400M403.20 59.600h10.400" stroke="#777" stroke-width="0.8"/><path d="M408.60 53.800h5M408.60 56.600h5" stroke="#777" stroke-width="0.8"/><path d="M407.80 55.2l-2.400 -2.200v1.500h-2v1.400h2v1.500z" fill="#2e75c8"/><path d="M418.70 50.00V62.40" stroke="#cbcbcb" stroke-width="0.8"/><path d="M431.800 50.600v9" stroke="#555" stroke-width="0.8"/><path d="M430 57.800l1.800 2.200l1.800 -2.200z" fill="#555"/><path d="M438.60 50.00V62.40" stroke="#cbcbcb" stroke-width="0.8"/><path d="M308.80 72.70h9.20" stroke="#8a8a8a" stroke-width="0.8"/><path d="M308.80 74.90h6.20" stroke="#8a8a8a" stroke-width="0.8"/><path d="M308.80 77.10h9.20" stroke="#8a8a8a" stroke-width="0.8"/><path d="M308.80 79.30h6.20" stroke="#8a8a8a" stroke-width="0.8"/><path d="M323.80 72.70h9.20" stroke="#8a8a8a" stroke-width="0.8"/><path d="M325.30 74.90h6.20" stroke="#8a8a8a" stroke-width="0.8"/><path d="M323.80 77.10h9.20" stroke="#8a8a8a" stroke-width="0.8"/><path d="M325.30 79.30h6.20" stroke="#8a8a8a" stroke-width="0.8"/><path d="M339.80 72.70h9.20" stroke="#8a8a8a" stroke-width="0.8"/><path d="M342.80 74.90h6.20" stroke="#8a8a8a" stroke-width="0.8"/><path d="M339.80 77.10h9.20" stroke="#8a8a8a" stroke-width="0.8"/><path d="M342.80 79.30h6.20" stroke="#8a8a8a" stroke-width="0.8"/><rect x="352.90" y="68.50" width="14.30" height="15.30" fill="#c8c8c8" stroke="#7d7d7d" stroke-width="0.9"/><path d="M355.2 72.00h9.800" stroke="#7a7a7a" stroke-width="0.8"/><path d="M355.2 74.10h9.800" stroke="#7a7a7a" stroke-width="0.8"/><path d="M355.2 76.20h9.800" stroke="#7a7a7a" stroke-width="0.8"/><path d="M355.2 78.30h9.800" stroke="#7a7a7a" stroke-width="0.8"/><path d="M355.2 80.40h9.800" stroke="#7a7a7a" stroke-width="0.8"/><path d="M370.20 69.80V82.60" stroke="#cbcbcb" stroke-width="0.8"/><path d="M376.2 72v8.200" stroke="#2e75c8" stroke-width="0.8"/><path d="M374.600 73.2l1.600 -2l1.600 2zM374.600 79l1.600 2l1.600 -2z" fill="#2e75c8"/><path d="M379.2 72.40h5.400" stroke="#777" stroke-width="0.8"/><path d="M379.2 75.00h5.400" stroke="#777" stroke-width="0.8"/><path d="M379.2 77.60h5.400" stroke="#777" stroke-width="0.8"/><path d="M379.2 80.20h5.400" stroke="#777" stroke-width="0.8"/><path d="M389.00 75.40l1.60 1.60l1.60 -1.60" stroke="#666" stroke-width="0.8" fill="none"/><path d="M399.50 69.80V82.60" stroke="#cbcbcb" stroke-width="0.8"/><path d="M406.800 75.600l3.200 -3.200l3 3l-3.200 3.200z" fill="#fff" stroke="#555" stroke-width="0.7"/><path d="M409.2 73.2v-1.800a1 1 0 0 1 2 0v2.200" fill="none" stroke="#555" stroke-width="0.6"/><path d="M413.2 75.2c.9 1.200 1.200 1.900 .9 2.500a.9 .9 0 0 1 -1.700 0c-.2 -.6 0 -1.300 .8 -2.500z" fill="#2e75c8"/><rect x="404.60" y="79.20" width="10.20" height="1.60" fill="#f3f3f3" stroke="#777" stroke-width="0.6"/><path d="M419.40 75.40l1.60 1.60l1.60 -1.60" stroke="#666" stroke-width="0.8" fill="none"/><rect x="430.20" y="71.50" width="8.20" height="8.20" fill="none" stroke="#b8b8b8" stroke-width="0.7"/><path d="M434.3 71.5v8.200M430.2 75.600h8.200" stroke="#b8b8b8" stroke-width="0.7"/><path d="M444.80 75.40l1.60 1.60l1.60 -1.60" stroke="#666" stroke-width="0.8" fill="none"/><path d="M457.20 93.60h-3.6M453.40 93.80v3.6" stroke="#777" stroke-width="0.6" fill="none"/><path d="M454.90 95.20l3 3m0 -2.2v2.2h-2.2" stroke="#777" stroke-width="0.6" fill="none"/><path d="M460.90 44.00V98.50" stroke="#cbcbcb" stroke-width="0.8"/><path d="M752.600 53.400l1.300 -1.300l1.300 1.300" fill="none" stroke="#aaa" stroke-width="0.7"/><path d="M752.400 64.600h3l-1.500 1.700z" fill="#444"/><path d="M752.400 75.600h3M752.400 77.400h3l-1.500 1.700z" fill="#444" stroke="#444" stroke-width="0.6"/><path d="M762.80 93.60h-3.6M759.00 93.80v3.6" stroke="#777" stroke-width="0.6" fill="none"/><path d="M760.50 95.20l3 3m0 -2.2v2.2h-2.2" stroke="#777" stroke-width="0.6" fill="none"/><path d="M765.50 44.00V98.50" stroke="#cbcbcb" stroke-width="0.8"/><circle cx="779" cy="49.8" r="2.500" fill="none" stroke="#2e75c8" stroke-width="0.9"/><path d="M777.2 51.600l-2.800 2.800" stroke="#2e75c8" stroke-width="1.1"/><path d="M815.80 50.60l1.60 1.60l1.60 -1.60" stroke="#666" stroke-width="0.8" fill="none"/><path d="M778 70.400l2 -2.400m-2 2.400l-2.600 -.4" stroke="#2e75c8" stroke-width="0.7" fill="none"/><path d="M776.2 76.600v8l1.900 -1.700l1.300 2.900l1 -.5l-1.300 -2.800h2.500z" fill="#fff" stroke="#555" stroke-width="0.6"/><path d="M827.30 80.40l1.60 1.60l1.60 -1.60" stroke="#666" stroke-width="0.8" fill="none"/><path d="M840.70 44.00V98.50" stroke="#cbcbcb" stroke-width="0.8"/><path d="M872.400 97.400l3.400 -3.400l3.400 3.400" fill="none" stroke="#555" stroke-width="1"/><path d="M878.400 109.2l2 -2.400l2 2.400z" fill="#555"/><path d="M878.400 449.400l2 2.400l2 -2.400z" fill="#555"/><path d="M140.600 461.600h3.200v4.400M145.400 461.600h-1.600" fill="none" stroke="#666" stroke-width="0.6"/><path d="M146.600 462l2.400 3M149 462l-2.400 3" stroke="#666" stroke-width="0.6"/><circle cx="163" cy="463.6" r="1.700" fill="none" stroke="#666" stroke-width="0.6"/><path d="M164.600 463.600h2.200M166 462.400l1.500 1.200l-1.500 1.200" fill="none" stroke="#666" stroke-width="0.6"/><rect x="718.00" y="458.00" width="24.00" height="8.00" fill="#c8c8c8"/><path d="M701.600 461.800v4.200M704 461.400v4.600M706.400 461.800v4.200" stroke="#777" stroke-width="1.2"/><rect x="725.60" y="461.20" width="8.80" height="5.00" fill="#8f8f8f"/><rect x="752.40" y="461.60" width="6.40" height="4.60" fill="none" stroke="#777" stroke-width="0.7"/><circle cx="758.4" cy="465" r="2" fill="#f3f3f3" stroke="#777" stroke-width="0.6"/><path d="M773.600 464.600h3.600" stroke="#555" stroke-width="0.8"/><path d="M781.400 464.800h64.600" stroke="#6b6b6b" stroke-width="0.9"/><rect x="806.80" y="460.40" width="1.90" height="5.60" fill="#444"/><path d="M813.400 463.800v2" stroke="#6b6b6b" stroke-width="0.7"/><path d="M850.400 464.600h3.600M852.2 462.800v3.200" stroke="#555" stroke-width="0.8"/></svg>
<div class="t" style="left:773.60px;top:60px;font-size:6.4px;line-height:7px;color:#b3352c;font-weight:700;letter-spacing:-0.069px;">ab</div>
<div class="t" style="left:776.40px;top:66px;font-size:6.0px;line-height:6px;color:#555;font-weight:700;letter-spacing:-0.087px;">ac</div>
</body></html>
